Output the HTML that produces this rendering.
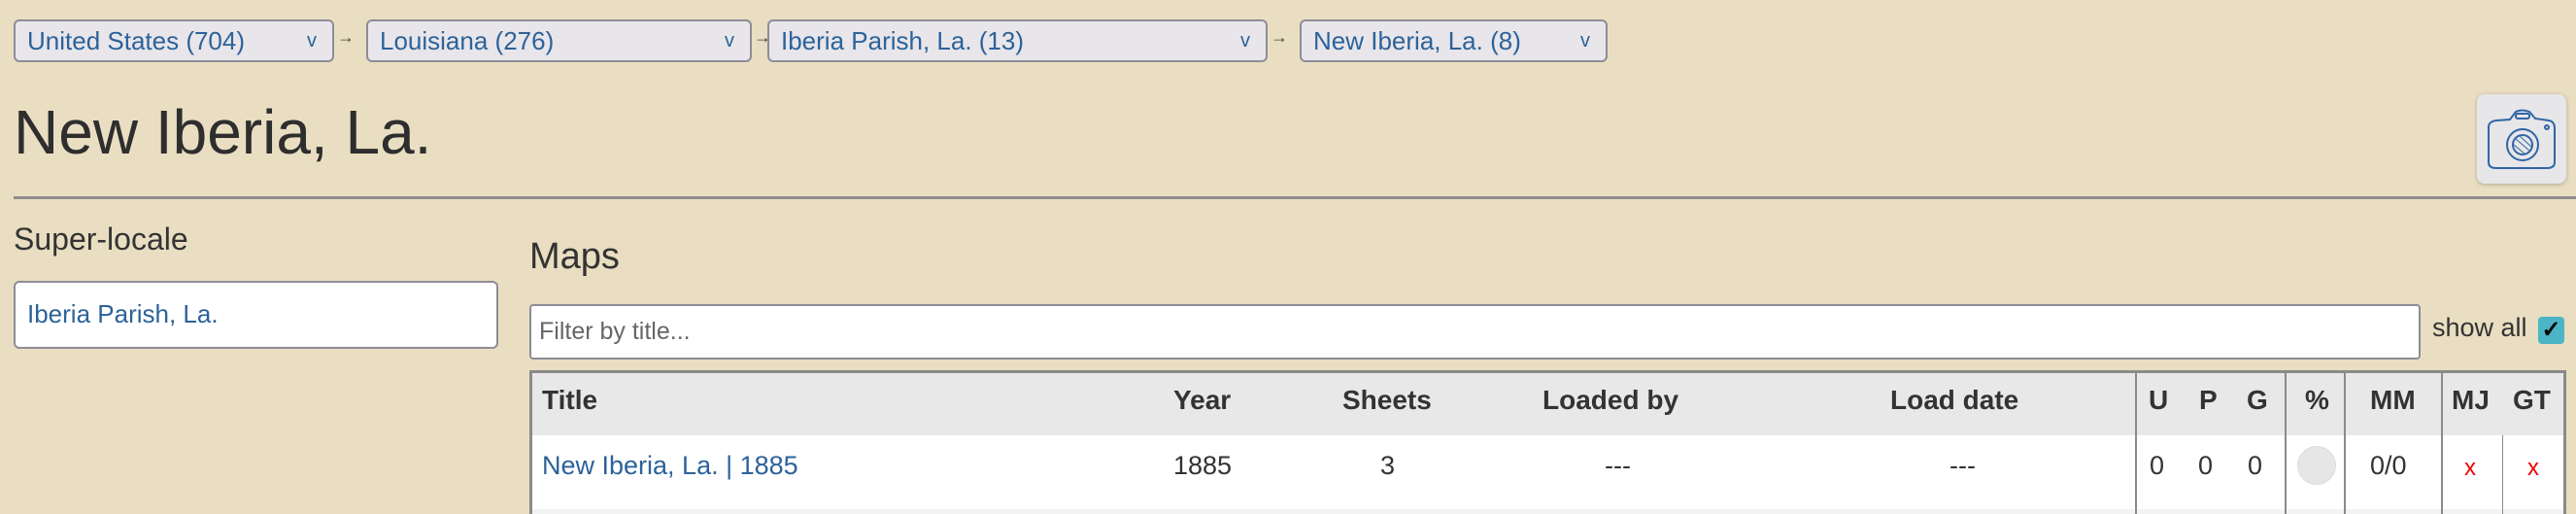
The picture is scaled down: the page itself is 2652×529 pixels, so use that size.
<!DOCTYPE html>
<html><head><meta charset="utf-8"><style>
*{box-sizing:border-box;margin:0;padding:0}
body{width:2652px;height:529px;overflow:hidden;background:#e9dec1;font-family:"Liberation Sans",sans-serif;color:#333;position:relative}
.a{position:absolute;white-space:nowrap}
.bc{position:absolute;top:20px;height:44px;background:#e8e6ea;border:2px solid #8e8c97;border-radius:6px;color:#2c629a;font-size:26px;line-height:40px;padding-left:12px}
.bc span.v{position:absolute;right:16px;top:0;font-size:20px;color:#2c629a}
.arr{position:absolute;top:28px;font-size:18px;color:#444;z-index:2}
.link{color:#2c629a}
.th{position:absolute;top:396px;font-size:28px;font-weight:600;color:#333;white-space:nowrap}
.td{position:absolute;top:464px;font-size:27px;white-space:nowrap}
.vl{position:absolute;width:2px;background:#8a8a8a}
</style></head><body>
<div class="bc" style="left:14px;width:330px">United States (704)<span class="v">v</span></div>
<div class="arr" style="left:347px">→</div>
<div class="bc" style="left:377px;width:397px">Louisiana (276)<span class="v">v</span></div>
<div class="arr" style="left:776px">→</div>
<div class="bc" style="left:790px;width:515px">Iberia Parish, La. (13)<span class="v">v</span></div>
<div class="arr" style="left:1308px">→</div>
<div class="bc" style="left:1338px;width:317px">New Iberia, La. (8)<span class="v">v</span></div>

<div class="a" style="left:14px;top:98px;font-size:64px;line-height:76px;color:#2e2e2e">New Iberia, La.</div>

<div class="a" style="left:2550px;top:97px;width:92px;height:92px;background:#e7e6e8;border-radius:8px;box-shadow:0 1px 4px rgba(0,0,0,.25)">
<svg width="92" height="92" viewBox="0 0 92 92" fill="none" stroke="#2f65a6" stroke-width="2">
<path d="M12 34 Q12 28 20 27 L34 26 L40 18 Q46 15 54 18 L60 25 L74 27 Q80 28 80 35 L80 70 Q80 76 72 76 L20 76 Q12 76 12 70 Z"/>
<rect x="40" y="20" width="14" height="5" rx="2"/>
<circle cx="47" cy="52" r="16"/><circle cx="47" cy="52" r="10"/>
<path d="M40 46 L54 58 M38 52 L50 62 M44 43 L56 54" stroke-width="1"/>
<circle cx="72" cy="34" r="2"/>
</svg></div>

<div class="a" style="left:14px;top:202px;width:2638px;height:3px;background:#8f8d90"></div>

<div class="a" style="left:14px;top:228px;font-size:32px">Super-locale</div>
<div class="a" style="left:14px;top:289px;width:499px;height:70px;background:#fff;border:2px solid #8e8c97;border-radius:6px;font-size:26px;line-height:64px;padding-left:12px;color:#2c629a">Iberia Parish, La.</div>

<div class="a" style="left:545px;top:243px;font-size:38px">Maps</div>
<div class="a" style="left:545px;top:313px;width:1947px;height:57px;background:#fff;border:2px solid #8e8c97;border-radius:4px;font-size:25px;line-height:53px;padding-left:8px;color:#666">Filter by title...</div>
<div class="a" style="left:2504px;top:322px;font-size:27px">show all</div>
<div class="a" style="left:2613px;top:326px;width:27px;height:28px;background:#4bb5c6;border-radius:4px;font-size:24px;line-height:28px;text-align:center;color:#000;font-weight:bold">✓</div>

<div class="a" style="left:545px;top:381px;width:2097px;height:148px;background:#fff;border:3px solid #8a8a8a;border-bottom:none"></div>
<div class="a" style="left:548px;top:384px;width:2091px;height:64px;background:#e8e8e8"></div>
<div class="a" style="left:548px;top:524px;width:2091px;height:5px;background:#f3f3f3"></div>
<div class="vl" style="left:2198px;top:384px;height:145px"></div>
<div class="vl" style="left:2352px;top:384px;height:145px"></div>
<div class="vl" style="left:2413px;top:384px;height:145px"></div>
<div class="vl" style="left:2513px;top:384px;height:145px"></div>
<div class="vl" style="left:2576px;top:448px;height:81px;width:1px"></div>

<div class="th" style="left:558px">Title</div>
<div class="th" style="left:1208px">Year</div>
<div class="th" style="left:1382px">Sheets</div>
<div class="th" style="left:1588px">Loaded by</div>
<div class="th" style="left:1946px">Load date</div>
<div class="th" style="left:2212px">U</div>
<div class="th" style="left:2264px">P</div>
<div class="th" style="left:2313px">G</div>
<div class="th" style="left:2373px">%</div>
<div class="th" style="left:2440px">MM</div>
<div class="th" style="left:2524px">MJ</div>
<div class="th" style="left:2587px">GT</div>

<div class="td link" style="left:558px">New Iberia, La. | 1885</div>
<div class="td" style="left:1208px">1885</div>
<div class="td" style="left:1421px">3</div>
<div class="td" style="left:1652px">---</div>
<div class="td" style="left:2007px">---</div>
<div class="td" style="left:2213px">0</div>
<div class="td" style="left:2263px">0</div>
<div class="td" style="left:2314px">0</div>
<div class="a" style="left:2365px;top:459px;width:40px;height:40px;border-radius:50%;background:#e6e6e6;border:1px solid #ddd"></div>
<div class="td" style="left:2440px">0/0</div>
<div class="td" style="left:2537px;color:#e00;font-size:24px;top:468px">x</div>
<div class="td" style="left:2602px;color:#e00;font-size:24px;top:468px">x</div>
</body></html>
